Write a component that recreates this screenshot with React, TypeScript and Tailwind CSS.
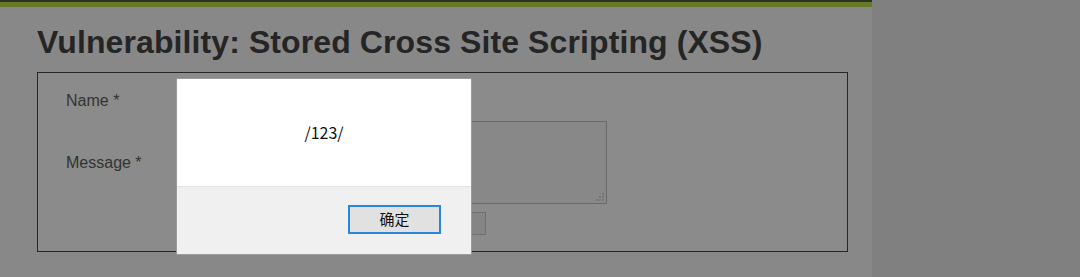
import React from "react";

export default function App() {
  return (
    <div className="flex w-[1080px] h-[277px] overflow-hidden" style={{ fontFamily: '"Liberation Sans", Arial, sans-serif' }}>
      <div className="relative w-[872px] h-full bg-[#888888] flex flex-col">
        <div className="h-[2px] bg-[#2e3420]" />
        <div className="h-[5px] bg-[#677a2a]" />
        <div className="pl-[37px] pt-[15px]">
          <h1 className="text-[32px] leading-[40px] font-bold text-[#252525] tracking-[0.1px]">
            Vulnerability: Stored Cross Site Scripting (XSS)
          </h1>
          <div className="mt-[10px] w-[811px] h-[180px] border border-[#262626] bg-[#8a8b8a] flex">
            <div className="w-[142px] pl-[28px] pt-[17px] flex flex-col text-[16px] text-[#333333]">
              <div className="h-[22px] leading-[22px]">Name *</div>
              <div className="mt-[40px] h-[22px] leading-[22px]">Message *</div>
            </div>
            <div className="pt-[6px] flex flex-col">
              <div className="w-[280px] h-[24px] border border-[#6f6f6f] bg-[#8a8a8a]" />
              <div className="relative mt-[18px] w-[427px] h-[83px] border border-[#6a6a6a] bg-[#888888]">
                <svg className="absolute right-[2px] bottom-[2px]" width="9" height="9" viewBox="0 0 9 9">
                  <rect x="7" y="1" width="2" height="2" fill="#777" />
                  <rect x="4" y="4" width="2" height="2" fill="#777" />
                  <rect x="7" y="4" width="2" height="2" fill="#777" />
                  <rect x="1" y="7" width="2" height="2" fill="#777" />
                  <rect x="4" y="7" width="2" height="2" fill="#777" />
                  <rect x="7" y="7" width="2" height="2" fill="#777" />
                </svg>
              </div>
              <div className="mt-[8px] flex">
                <div className="ml-[180px] w-[126px] h-[23px] border border-[#707070] bg-[#858585]" />
              </div>
            </div>
          </div>
        </div>
        <div className="absolute left-[176px] top-[78px] w-[296px] h-[177px] border border-[#9a9a9a] flex flex-col" style={{ fontFamily: '"Noto Sans CJK SC", "Noto Sans", sans-serif' }}>
          <div className="h-[107px] bg-white flex items-center justify-center text-[16px] text-[#111] pb-[2px]">
            /123/
          </div>
          <div className="flex-1 bg-[#f0f0f0] border-t border-[#e3e3e3] flex justify-end items-start pt-[18px] pr-[30px]">
            <div className="w-[93px] h-[29px] border-2 border-[#2a86d8] bg-[#e1e1e1] flex items-center justify-center text-[15px] text-[#111]">
              确定
            </div>
          </div>
        </div>
      </div>
      <div className="flex-1 h-full bg-[#808080]" />
    </div>
  );
}
